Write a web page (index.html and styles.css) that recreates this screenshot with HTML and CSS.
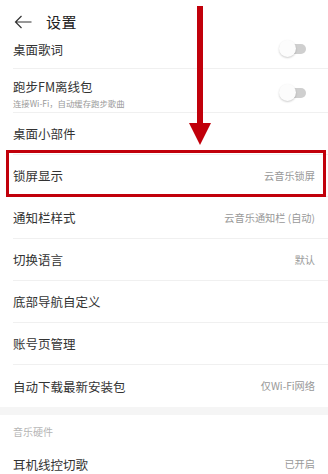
FILE: index.html
```html
<!DOCTYPE html>
<html lang="zh">
<head>
  <meta charset="UTF-8" />
  <meta name="viewport" content="width=device-width, initial-scale=1.0"/>
  <title>设置</title>
  <link rel="stylesheet" href="styles.css">
</head>
<body>
  <div class="page">
    <div class="header">
      <svg class="back" viewBox="0 0 18 14" width="18" height="14">
        <path d="M17.5 7H1.5M7.5 1L1.5 7L7.5 13" fill="none" stroke="#333" stroke-width="1.2"/>
      </svg>
      <span class="title">设置</span>
    </div>

    <div class="list">
      <div class="row first">
        <span class="label">桌面歌词</span>
        <span class="switch"><span class="knob"></span></span>
      </div>
      <div class="row tall">
        <div class="texts">
          <span class="label">跑步FM离线包</span>
          <span class="sub">连接Wi-Fi，自动缓存跑步歌曲</span>
        </div>
        <span class="switch"><span class="knob"></span></span>
      </div>
      <div class="row"><span class="label">桌面小部件</span></div>
      <div class="row"><span class="label">锁屏显示</span><span class="value">云音乐锁屏</span></div>
      <div class="row"><span class="label">通知栏样式</span><span class="value">云音乐通知栏 (自动)</span></div>
      <div class="row"><span class="label">切换语言</span><span class="value">默认</span></div>
      <div class="row"><span class="label">底部导航自定义</span></div>
      <div class="row"><span class="label">账号页管理</span></div>
      <div class="row last"><span class="label">自动下载最新安装包</span><span class="value">仅Wi-Fi网络</span></div>
    </div>

    <div class="band"></div>
    <div class="section">音乐硬件</div>
    <div class="list">
      <div class="row last"><span class="label">耳机线控切歌</span><span class="value">已开启</span></div>
    </div>

    <!-- annotation overlays -->
    <div class="mark-line"></div>
    <svg class="mark-head" viewBox="0 0 22 22" width="22" height="22">
      <polygon points="0,0 22,0 11,22" fill="#c1000b"/>
    </svg>
    <div class="mark-box"></div>
  </div>
</body>
</html>
```

FILE: styles.css
```css
body {
  margin: 0;
  padding: 0;
  background: #fff;
  font-family: "Noto Sans CJK SC", "Noto Sans", sans-serif;
  color: #333;
}

.page {
  position: relative;
  width: 328px;
  height: 474px;
  overflow: hidden;
}

.header {
  height: 30px;
  display: flex;
  align-items: flex-start;
  padding: 14px 0 0 14px;
  box-sizing: border-box;
}

.back {
  margin-top: 1px;
}

.title {
  font-size: 15px;
  line-height: 16px;
  margin-left: 14px;
  letter-spacing: 0.5px;
  color: #222;
}

.list {
  padding-left: 13px;
}

.row {
  height: 42px;
  box-sizing: border-box;
  border-bottom: 1px solid #f0f0f0;
  display: flex;
  align-items: center;
  justify-content: space-between;
  padding-right: 13px;
}

.row.first {
  height: 39px;
}

.row.tall {
  height: 44px;
  align-items: flex-start;
  padding-top: 10px;
}

.row.tall .switch {
  margin-top: 6px;
}

.row.last {
  border-bottom: none;
}

.label {
  font-size: 12.5px;
  line-height: 15px;
  color: #333;
}

.texts {
  display: flex;
  flex-direction: column;
  gap: 3px;
}

.texts .label {
  line-height: 16px;
}

.sub {
  font-size: 8.4px;
  line-height: 11px;
  color: #999;
}

.value {
  font-size: 10.2px;
  line-height: 12px;
  color: #999;
}

.switch {
  position: relative;
  width: 27px;
  height: 16px;
  margin-right: 9px;
}

.switch::before {
  content: "";
  position: absolute;
  left: 6px;
  right: 0;
  top: 3px;
  height: 10px;
  border-radius: 5px;
  background: #cfcfcf;
}

.knob {
  position: absolute;
  left: 0;
  top: -1px;
  width: 17px;
  height: 17px;
  border-radius: 50%;
  background: #fcfcfc;
  box-shadow: 0 1px 2px rgba(0, 0, 0, 0.2);
}

.band {
  height: 8px;
  background: #f5f5f5;
}

.section {
  height: 28px;
  box-sizing: border-box;
  padding: 11px 0 0 13px;
  font-size: 10px;
  line-height: 12px;
  color: #b5b5b5;
}

.mark-line {
  position: absolute;
  left: 197px;
  top: 6px;
  width: 6px;
  height: 118px;
  background: #c1000b;
}

.mark-head {
  position: absolute;
  left: 189px;
  top: 123px;
}

.mark-box {
  position: absolute;
  left: 6px;
  top: 150px;
  width: 320px;
  height: 47px;
  box-sizing: border-box;
  border: 3.5px solid #c1000b;
}
```
